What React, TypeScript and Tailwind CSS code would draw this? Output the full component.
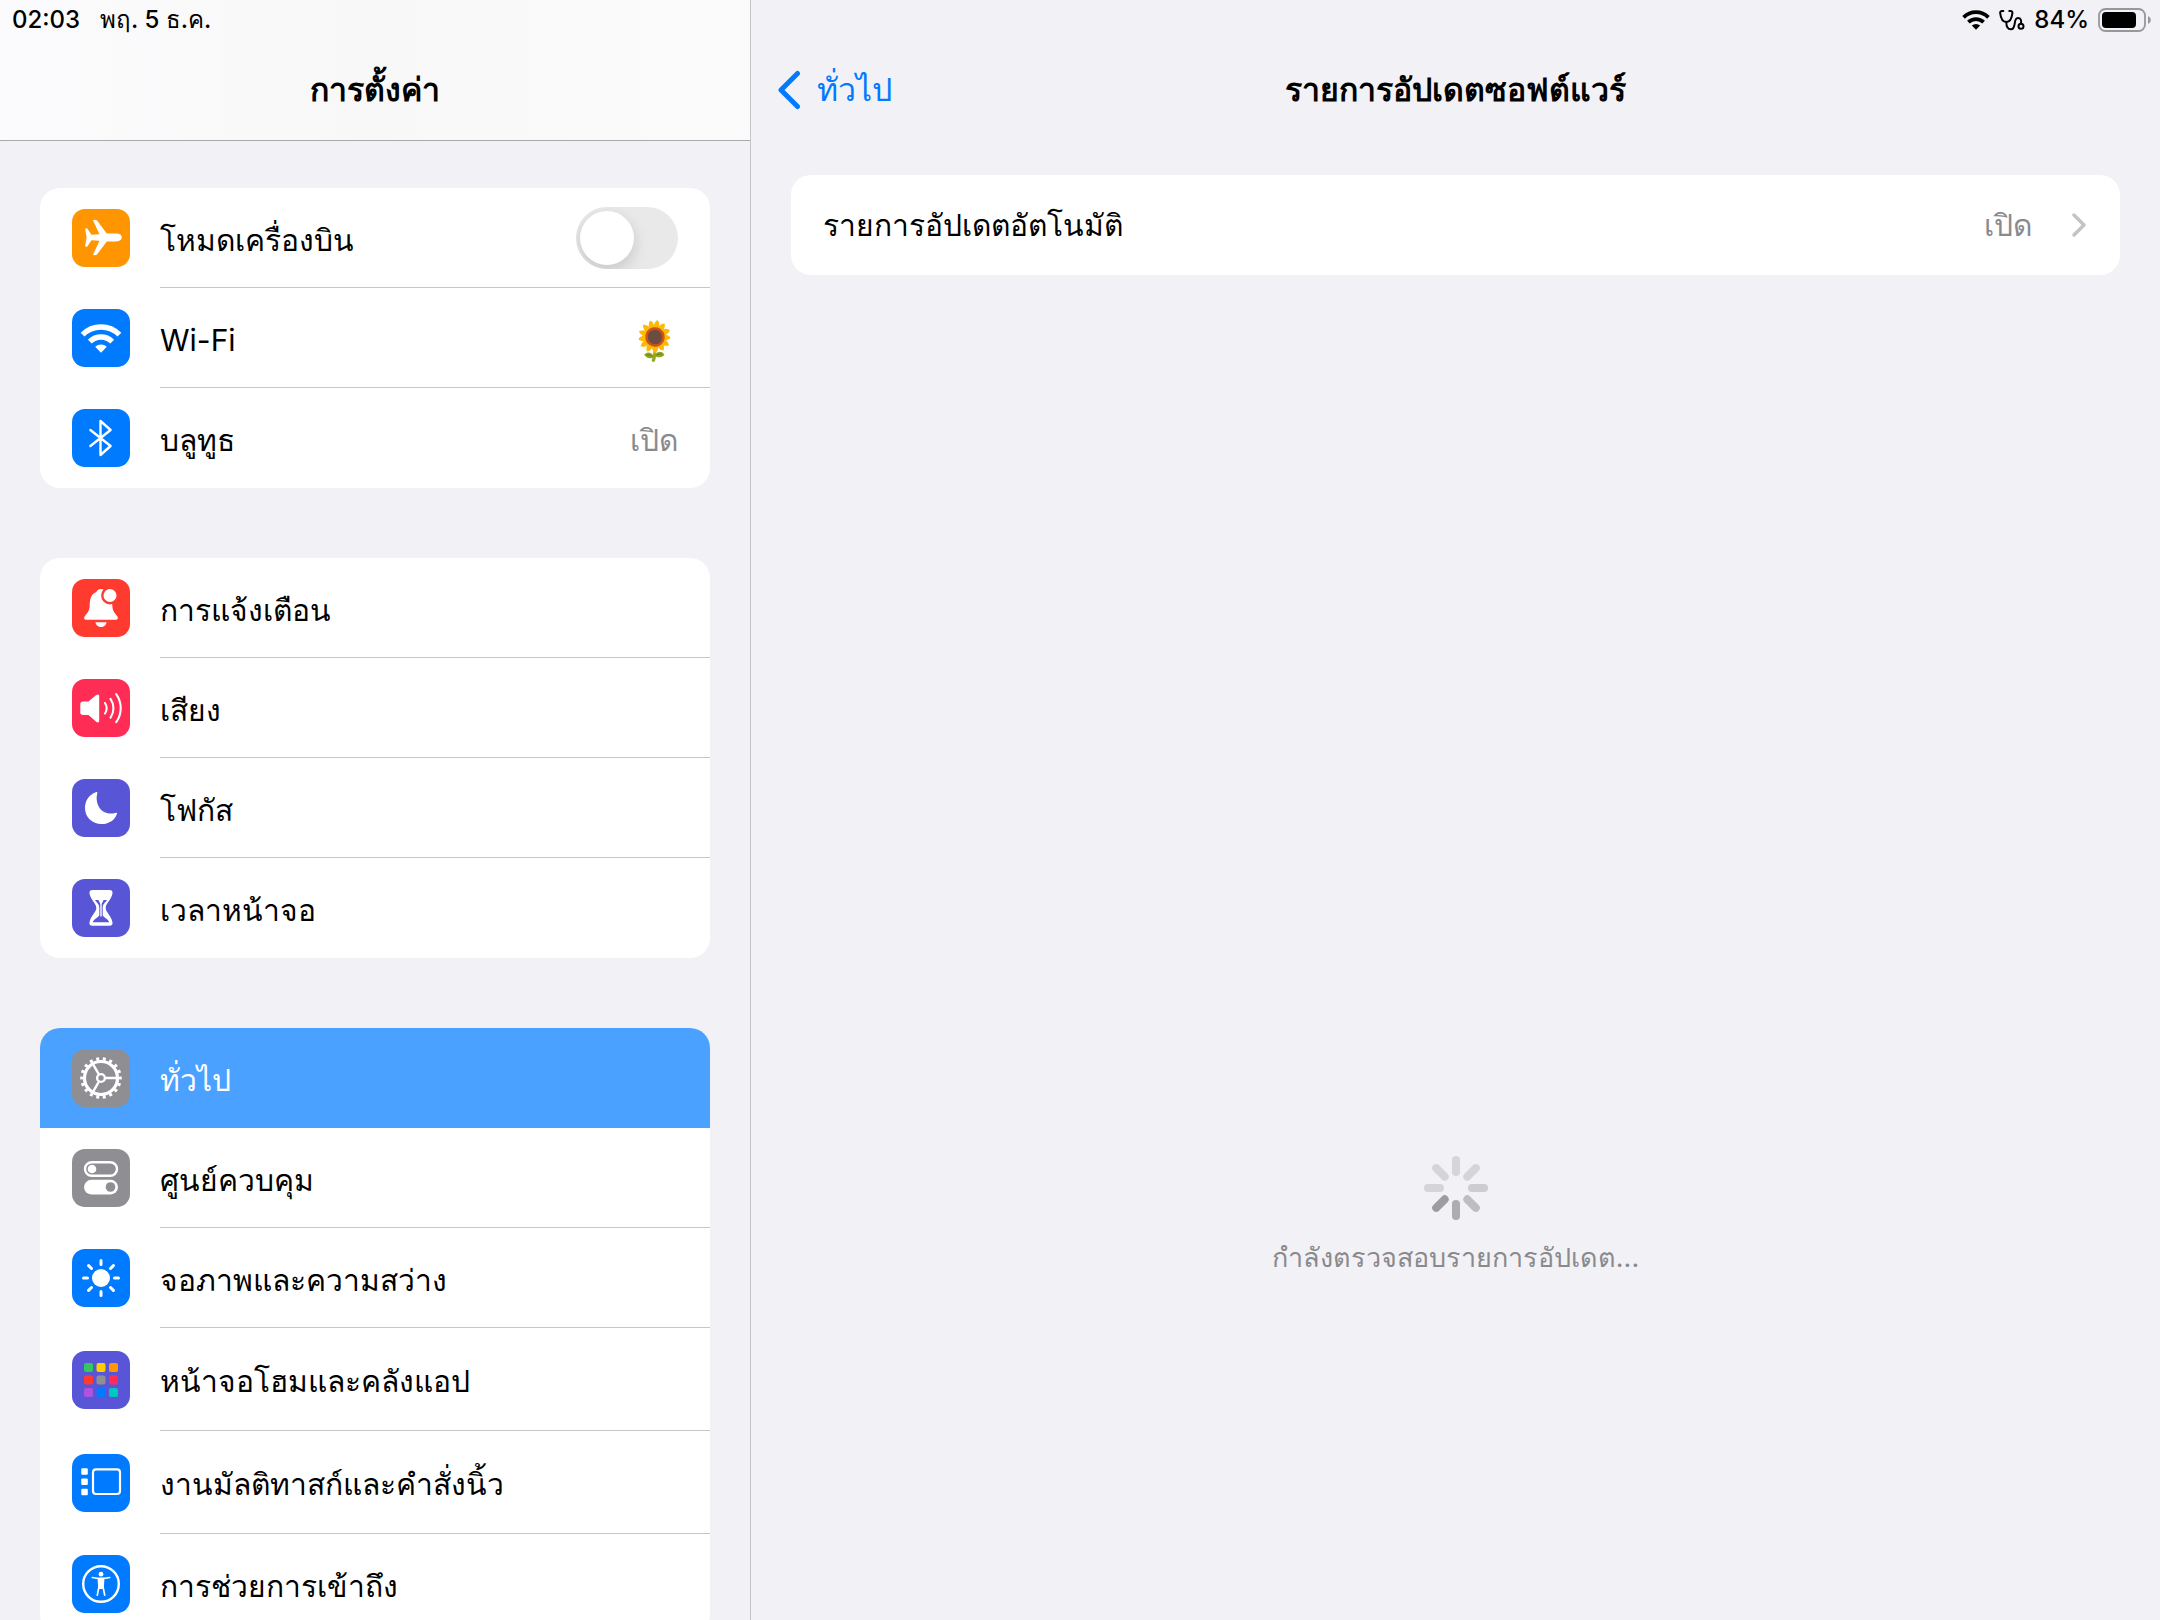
import type { ReactNode } from 'react'
import clsx from 'clsx'

interface SettingsItem {
  id: string
  label: string
  color: string
  icon: ReactNode
  value?: string
  emoji?: string
  toggle?: boolean
  selected?: boolean
  tall?: boolean
}

const AirplaneIcon = () => (
  <path
    fill="#fff"
    d="M13.2 20.2c0-.8.5-1.1 1.2-.9l.9.3 4.2 6.2 8-.5-6.1-13c-.5-1.1 0-1.7.9-1.6l1.7.2c.6.1 1 .4 1.4 1L34.8 24.6h8.700c4 0 6.300 1.500 6.300 3.900s-2.300 3.900-6.300 3.900h-8.700L25.400 45.100c-.4.6-.8.9-1.400 1l-1.700.2c-.9.1-1.400-.5-.9-1.600l6.100-13-8-.5-4.200 6.200-.9.3c-.7.2-1.200-.1-1.200-.9l1.400-8.300z"
  />
)

const WifiIcon = () => (
  <g fill="none" stroke="#fff" strokeWidth="5.4">
    <path d="M10.6 25.6a26 26 0 0 1 36.8 0" />
    <path d="M17.8 32.6a16 16 0 0 1 22.4 0" />
    <path fill="#fff" stroke="none" d="M23.2 37.8a8.4 8.4 0 0 1 11.6 0L29 43.7z" />
  </g>
)

const BluetoothIcon = () => (
  <path
    fill="none"
    stroke="#fff"
    strokeWidth="2.4"
    strokeLinejoin="round"
    strokeLinecap="round"
    d="M18.4 21l20.2 16-10.1 9V12l10.1 9-20.2 16"
  />
)

const BellIcon = () => (
  <g fill="#fff">
    <path d="M14.5 40.8c-2.3 0-3-2-1.7-3.6 2.3-2.9 4.6-5.2 4.8-9.2.3-7.6 1-12.5 6.8-14.9.7-1.9 2.2-3.1 4.6-3.1s3.9 1.2 4.6 3.1c5.8 2.4 6.5 7.3 6.8 14.9.2 4 2.5 6.3 4.8 9.2 1.3 1.6.6 3.6-1.7 3.6z" />
    <path d="M23.4 43.2h11.2c-.5 3-2.7 4.8-5.6 4.8s-5.1-1.8-5.6-4.8z" />
    <circle cx="38" cy="16.5" r="7.700" stroke="#ff3b30" strokeWidth="2.4" />
  </g>
)

const SpeakerIcon = () => (
  <g fill="none" stroke="#fff" strokeWidth="2.1" strokeLinecap="round">
    <path
      fill="#fff"
      stroke="none"
      d="M11 22.5h5.5l7.7-6.4c1.5-1.2 3-.8 3 .9v24.8c0 1.700-1.500 2.200-3 .9l-7.700-6.700H11c-1.800 0-2.700-1-2.700-2.700v-8.100c0-1.700.9-2.700 2.700-2.700z"
    />
    <path d="M33 24a9.500 9.500 0 0 1 0 10.500" />
    <path d="M38.500 19.800a16.500 16.500 0 0 1 0 18.800" />
    <path d="M44.200 15.200a24 24 0 0 1 0 28" />
  </g>
)

const MoonIcon = () => (
  <path
    fill="#fff"
    d="M23.8 13.3c1.2-.5 1.9.1 1.5 1.3-1 3.3-1 8.2 1.3 12.7 3.2 6.2 9.8 8.5 16.8 6.6 1.3-.3 1.9.3 1.4 1.5C42.3 41.3 36.8 45 29.5 45 20 45 13 38.2 13 29c0-7.4 4.2-13.3 10.800-15.700z"
  />
)

const HourglassIcon = () => (
  <g>
    <path
      fill="#fff"
      d="M20.500 11h17c2.200 0 3.300 1.200 3 3.300-.8 6.400-6.800 10.200-6.800 14.600s6 8.200 6.800 14.600c.3 2.100-.8 3.300-3 3.300h-17c-2.200 0-3.300-1.200-3-3.300.8-6.400 6.800-10.200 6.800-14.600s-6-8.200-6.800-14.600c-.3-2.100.8-3.300 3-3.300z"
    />
    <path
      fill="#5856d6"
      d="M23 21h12c-1.500 2.500-4.300 4-4.300 7.800V36c0 1.800 5.700 4.200 6.600 7.300H20.700c.9-3.100 6.600-5.500 6.600-7.300v-7.200c0-3.800-2.800-5.300-4.300-7.800z"
    />
    <path fill="#fff" d="M26.500 21h5L29.700 25v12.500h-1.400V25z" />
  </g>
)

const GearIcon = () => (
  <g fill="none" stroke="#fff">
    <circle cx="29" cy="29" r="16.500" strokeWidth="3.200" />
    <circle cx="29" cy="29" r="19.200" strokeWidth="3.200" pathLength="72" strokeDasharray="1.800 2.200" strokeDashoffset="0.900" />
    <circle cx="29" cy="29" r="3.900" strokeWidth="2.400" />
    <path strokeWidth="2.400" d="M33.500 29h12M26.750 25.100l-6.200-10.700M26.750 32.900l-6.200 10.700" />
  </g>
)

const ControlCenterIcon = () => (
  <g>
    <rect x="13" y="13.200" width="32" height="13.600" rx="6.800" fill="none" stroke="#fff" strokeWidth="2.400" />
    <circle cx="20" cy="20" r="4.300" fill="#fff" />
    <rect x="12" y="30.800" width="34" height="14.600" rx="7.300" fill="#fff" />
    <circle cx="38.500" cy="38" r="4.800" fill="#8e8e93" />
  </g>
)

const SunIcon = () => (
  <g stroke="#fff" strokeWidth="3" strokeLinecap="round">
    <circle cx="29" cy="29" r="9" fill="#fff" stroke="none" />
    <path d="M29 11.500v4M29 42.500v4M11.500 29h4M42.500 29h4M16.600 16.600l2.900 2.900M38.500 38.500l2.900 2.900M16.600 41.400l2.900-2.900M38.500 19.500l2.900-2.900" />
  </g>
)

const gridColors = ['#34c759', '#ffcc00', '#ff9500', '#ff3b30', '#8e8e93', '#ff2d55', '#af52de', '#007aff', '#00c7be']

const HomeScreenIcon = () => (
  <g>
    {gridColors.map((color, i) => (
      <rect key={color} x={12 + (i % 3) * 12.5} y={12 + Math.floor(i / 3) * 12.5} width="9" height="9" rx="2" fill={color} />
    ))}
  </g>
)

const MultitaskingIcon = () => (
  <g fill="#fff">
    <rect x="9.300" y="14.300" width="6.500" height="6.500" rx="1" />
    <rect x="9.300" y="24.500" width="6.500" height="6.500" rx="1" />
    <rect x="9.300" y="34.700" width="6.500" height="6.500" rx="1" />
    <rect x="21" y="15.300" width="27" height="24.700" rx="3" fill="none" stroke="#fff" strokeWidth="2.200" />
  </g>
)

const AccessibilityIcon = () => (
  <g fill="none" stroke="#fff" strokeLinecap="round" strokeLinejoin="round">
    <circle cx="29" cy="29" r="17.800" strokeWidth="2.400" />
    <circle cx="29" cy="19.200" r="2.400" fill="#fff" stroke="none" />
    <path strokeWidth="1.700" d="M20.300 22.500c5.500 1.200 11.900 1.200 17.400 0M25.300 40.200l1.900-9.600M32.700 40.200l-1.900-9.600" />
    <path fill="#fff" stroke="none" d="M25.500 23h7l-.6 8.500-1.200 2.400h-3.400l-1.200-2.400z" />
  </g>
)

const groups: SettingsItem[][] = [
  [
    { id: 'airplane', label: 'โหมดเครื่องบิน', color: 'bg-[#ff9500]', icon: <AirplaneIcon />, toggle: true },
    { id: 'wifi', label: 'Wi-Fi', color: 'bg-[#007aff]', icon: <WifiIcon />, emoji: '🌻' },
    { id: 'bluetooth', label: 'บลูทูธ', color: 'bg-[#007aff]', icon: <BluetoothIcon />, value: 'เปิด' },
  ],
  [
    { id: 'notifications', label: 'การแจ้งเตือน', color: 'bg-[#ff3b30]', icon: <BellIcon /> },
    { id: 'sounds', label: 'เสียง', color: 'bg-[#ff2d55]', icon: <SpeakerIcon /> },
    { id: 'focus', label: 'โฟกัส', color: 'bg-[#5856d6]', icon: <MoonIcon /> },
    { id: 'screen-time', label: 'เวลาหน้าจอ', color: 'bg-[#5856d6]', icon: <HourglassIcon /> },
  ],
  [
    { id: 'general', label: 'ทั่วไป', color: 'bg-[#8e8e93]', icon: <GearIcon />, selected: true },
    { id: 'control-center', label: 'ศูนย์ควบคุม', color: 'bg-[#8e8e93]', icon: <ControlCenterIcon /> },
    { id: 'display', label: 'จอภาพและความสว่าง', color: 'bg-[#007aff]', icon: <SunIcon /> },
    { id: 'home-screen', label: 'หน้าจอโฮมและคลังแอป', color: 'bg-[#5856d6]', icon: <HomeScreenIcon />, tall: true },
    { id: 'multitasking', label: 'งานมัลติทาสก์และคำสั่งนิ้ว', color: 'bg-[#007aff]', icon: <MultitaskingIcon />, tall: true },
    { id: 'accessibility', label: 'การช่วยการเข้าถึง', color: 'bg-[#007aff]', icon: <AccessibilityIcon /> },
  ],
]

function SettingsRow({ item, last }: { item: SettingsItem; last: boolean }) {
  const content = (
    <>
      <span className={clsx('size-[58px] shrink-0 rounded-[13px]', item.color)}>
        <svg viewBox="0 0 58 58" className="size-full" aria-hidden="true">
          {item.icon}
        </svg>
      </span>
      <span
        className={clsx(
          'flex h-full flex-1 items-center justify-between border-b pr-8',
          last || item.selected ? 'border-transparent' : 'border-[#c6c6c8]'
        )}
      >
        <span className="pt-1">{item.label}</span>
        {item.value && <span className="pt-1 text-[#8a8a8e]">{item.value}</span>}
        {item.emoji && <span className="pt-1 text-[38px]">{item.emoji}</span>}
        {item.toggle && (
          <input
            id={item.id}
            type="checkbox"
            role="switch"
            className="flex h-[62px] w-[102px] appearance-none items-center overflow-hidden rounded-full bg-[#e9e9ea] p-1 before:size-[54px] before:rounded-full before:bg-white before:shadow-[0_6px_16px_rgba(0,0,0,0.15)] checked:justify-end checked:bg-[#34c759]"
          />
        )}
      </span>
    </>
  )

  const rowClass = clsx(
    'flex items-center gap-[30px] pl-8',
    item.tall ? 'h-[103px]' : 'h-[100px]',
    item.selected && 'bg-[#4ba1ff] text-white'
  )

  return (
    <li>
      {item.toggle ? (
        <label htmlFor={item.id} className={rowClass}>
          {content}
        </label>
      ) : (
        <a href={`#${item.id}`} aria-current={item.selected ? 'page' : undefined} className={rowClass}>
          {content}
        </a>
      )}
    </li>
  )
}

function StatusIcons() {
  return (
    <div className="flex h-10 items-center justify-end gap-[9px] pr-2 text-[24px] leading-10 font-medium">
      <svg viewBox="0 0 28 20" className="h-5 w-7" fill="none" stroke="#000" strokeWidth="3.800" aria-hidden="true">
        <path d="M1.600 7.300a17.600 17.600 0 0 1 24.800 0" />
        <path d="M6.400 12.200a10.800 10.800 0 0 1 15.200 0" />
        <path fill="#000" stroke="none" d="M9.800 15.600a6 6 0 0 1 8.400 0L14 19.800z" />
      </svg>
      <svg viewBox="0 0 26 22" className="h-[22px] w-[26px]" fill="none" stroke="#000" strokeWidth="2" strokeLinecap="round" aria-hidden="true">
        <path d="M4.300 2H3.100C1.700 2 1 2.800 1.200 4.200 1.700 8.800 3.700 13 7.300 13s5.600-4.200 6.100-8.800c.2-1.400-.5-2.200-1.900-2.200h-1.200" />
        <path d="M7.300 13c0 4.800 1.700 7.300 4.600 7.300 6 0 1.800-11.300 7-11.300 3 0 3.600 2.500 3.100 5.500" />
        <circle cx="22" cy="17.300" r="2.500" />
      </svg>
      <span>84%</span>
      <svg viewBox="0 0 54 24" className="h-6 w-[54px]" aria-hidden="true">
        <rect x="1" y="1" width="46" height="22" rx="6.500" fill="none" stroke="#98979c" strokeWidth="1.800" />
        <rect x="4" y="4" width="34" height="16" rx="4" fill="#000" />
        <path d="M50 8.200c1.800.6 2.800 2 2.800 3.800s-1 3.200-2.800 3.800z" fill="#98979c" />
      </svg>
    </div>
  )
}

const spokes = ['#d5d4d9', '#d5d4d9', '#cdccd1', '#bebdc2', '#adacb1', '#9d9ca1', '#d5d4d9', '#d5d4d9']

function Spinner() {
  return (
    <svg viewBox="0 0 64 64" className="size-16" role="progressbar" aria-label="กำลังตรวจสอบรายการอัปเดต">
      {spokes.map((color, i) => (
        <rect key={i} x="28" y="0" width="8" height="20" rx="4" fill={color} transform={`rotate(${i * 45} 32 32)`} />
      ))}
    </svg>
  )
}

export default function App() {
  return (
    <div className="flex h-screen overflow-hidden bg-[#f2f1f6] font-['Inter',sans-serif] text-[30px] leading-10 text-black">
      {/* Sidebar */}
      <aside className="flex w-[751px] shrink-0 flex-col border-r border-[#c4c3c8]">
        <header className="shrink-0 border-b border-[#a9a9ab] bg-linear-to-r from-[#fbfbfd] via-[#f8f8f8] to-[#fbfbfc]">
          <div className="flex h-10 items-center gap-5 pl-3 text-[24px] font-medium">
            <span>02:03</span>
            <span>พฤ. 5 ธ.ค.</span>
          </div>
          <h1 className="h-[100px] pt-[30px] text-center text-[32px] font-semibold">การตั้งค่า</h1>
        </header>
        <nav className="flex flex-1 flex-col gap-[70px] overflow-y-auto px-10 pt-[47px] [scrollbar-width:none]">
          {groups.map((items) => (
            <ul key={items[0].id} className="shrink-0 overflow-hidden rounded-[20px] bg-white">
              {items.map((item, i) => (
                <SettingsRow key={item.id} item={item} last={i === items.length - 1} />
              ))}
            </ul>
          ))}
        </nav>
      </aside>

      {/* Software update */}
      <main className="flex min-w-0 flex-1 flex-col">
        <StatusIcons />
        <header className="grid h-[100px] shrink-0 grid-cols-3 items-center px-[26px] text-[32px]">
          <a href="#general" className="flex items-center gap-4 text-[#007aff]">
            <svg viewBox="0 0 24 40" className="h-10 w-6" fill="none" stroke="currentColor" strokeWidth="5" strokeLinecap="round" strokeLinejoin="round" aria-hidden="true">
              <path d="M20.500 3.500L4 20l16.500 16.500" />
            </svg>
            <span>ทั่วไป</span>
          </a>
          <h2 className="text-center font-semibold whitespace-nowrap">รายการอัปเดตซอฟต์แวร์</h2>
        </header>
        <section className="flex flex-1 flex-col px-10 pt-[35px]">
          <a href="#automatic-updates" className="flex h-[100px] items-center rounded-[20px] bg-white pr-[34px] pl-8">
            <span className="flex-1">รายการอัปเดตอัตโนมัติ</span>
            <span className="text-[#8a8a8e]">เปิด</span>
            <svg viewBox="0 0 14 24" className="ml-10 h-6 w-[14px]" fill="none" stroke="#c4c4c6" strokeWidth="3.400" strokeLinecap="round" strokeLinejoin="round" aria-hidden="true">
              <path d="M2 2l10 10L2 22" />
            </svg>
          </a>
          <div className="grow-[18]" />
          <div className="flex flex-col items-center gap-[18px]">
            <Spinner />
            <p className="text-[27px] text-[#8a8a8e]">กำลังตรวจสอบรายการอัปเดต...</p>
          </div>
          <div className="grow-[7]" />
        </section>
      </main>
    </div>
  )
}
